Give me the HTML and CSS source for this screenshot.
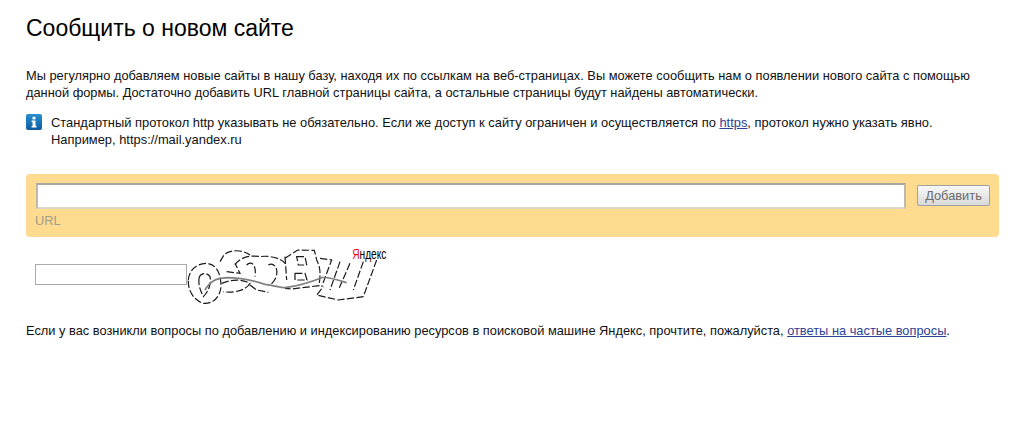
FILE: index.html
```html
<!DOCTYPE html>
<html lang="ru">
<head>
<meta charset="utf-8">
<title>Сообщить о новом сайте</title>
<link rel="stylesheet" href="styles.css">
</head>
<body>
<h1 class="title">Сообщить о новом сайте</h1>
<p class="intro">Мы регулярно добавляем новые сайты в нашу базу, находя их по ссылкам на веб-страницах. Вы можете сообщить нам о появлении нового сайта с помощью данной формы. Достаточно добавить URL главной страницы сайта, а остальные страницы будут найдены автоматически.</p>
<div class="note">
  <svg class="note-icon" width="16" height="16" viewBox="0 0 16 16" aria-hidden="true">
    <defs><linearGradient id="ig" x1="0" y1="0" x2="0" y2="1"><stop offset="0" stop-color="#2a8fd0"/><stop offset="1" stop-color="#0b5a9e"/></linearGradient></defs>
    <rect width="16" height="16" rx="2" fill="url(#ig)"/>
    <rect x="6.5" y="2.8" width="3" height="2.6" fill="#fff"/>
    <path d="M5.6 6.6h3.9v5.2h1v1.6H5.6v-1.6h1v-3.6h-1z" fill="#fff"/>
  </svg>
  <p class="note-text">Стандартный протокол http указывать не обязательно. Если же доступ к сайту ограничен и осуществляется по <a href="#">https</a>, протокол нужно указать явно.<br>Например, https://mail.yandex.ru</p>
</div>
<form class="panel">
  <div class="panel-main">
    <input class="url-input" type="text" aria-label="URL">
    <div class="url-label">URL</div>
  </div>
  <button class="add-btn" type="button">Добавить</button>
</form>
<div class="captcha">
  <input class="captcha-input" type="text" aria-label="captcha">
  <div class="captcha-pic">
    <svg width="200" height="60" viewBox="6 0 600 180" aria-hidden="true">
      <g fill="none" stroke="#1a1a1a" stroke-width="3.6" stroke-dasharray="22 7">
        <path d="M10 105C12 75 35 55 65 55C95 58 108 85 108 125C105 160 80 178 55 175C25 165 8 135 10 105Z"/>
        <path d="M42 100C45 85 65 80 75 95C80 115 70 140 55 155C45 135 40 120 42 100Z"/>
        <path d="M105 50L118 28C140 12 175 15 195 30"/>
        <path d="M110 115C135 105 165 100 195 115C185 135 150 145 115 140"/>
        <path d="M150 60C165 35 200 30 225 35C250 30 290 40 300 55"/>
        <path d="M125 80L165 85L150 55M185 60C200 45 215 60 210 95M195 120L215 135L250 142"/>
        <path d="M250 60C265 50 280 70 275 90C272 105 262 115 255 120"/>
        <path d="M300 35L305 105"/>
      </g>
      <g transform="translate(300 0)" fill="none" stroke="#1a1a1a" stroke-width="3.6" stroke-dasharray="22 7">
        <path d="M0 40L38 15L88 16L95 45C105 65 108 80 102 122L20 132L0 130"/>
        <path d="M35 35L60 35L65 60L40 60Z"/>
        <path d="M30 85L60 85L66 105L30 105Z"/>
        <path d="M105 40L140 45L110 125M165 50L135 135M195 55L160 135M235 50L205 135"/>
        <path d="M275 45L235 155L160 165L95 150L115 125"/>
      </g>
      <path d="M60 135C75 110 90 100 125 98C170 98 200 105 240 118C270 122 285 128 300 128C330 124 375 112 410 98C430 95 460 105 485 113" fill="none" stroke="#808080" stroke-width="5"/>
    </svg>
    <span class="captcha-logo"><span class="logo-ya">Я</span>ндекс</span>
  </div>
</div>
<p class="footer-text">Если у вас возникли вопросы по добавлению и индексированию ресурсов в поисковой машине Яндекс, прочтите, пожалуйста, <a href="#">ответы на частые вопросы</a>.</p>
</body>
</html>
```
FILE: styles.css
```css
html, body { margin: 0; padding: 0; background: #fff; }
body {
  width: 1018px;
  height: 425px;
  overflow: hidden;
  font-family: "Liberation Sans", Arial, sans-serif;
  font-size: 12.83px;
  line-height: 17px;
  color: #111;
  box-sizing: border-box;
  padding: 15px 19px 0 26px;
}
a { color: #2c3f97; }
.title {
  margin: 0 0 25px;
  font-size: 23px;
  line-height: 27px;
  font-weight: 400;
  color: #000;
}
.intro { margin: 0 0 13px; }
.note { display: flex; gap: 9px; align-items: flex-start; }
.note-icon { flex: none; }
.note-text { margin: 0; font-size: 12.9px; }
.panel {
  display: flex;
  align-items: flex-start;
  gap: 11px;
  margin-top: 26px;
  height: 63px;
  box-sizing: border-box;
  padding: 9px 9px 0 10px;
  background: #fedb8f;
  border-radius: 4px;
}
.panel-main { flex: 1; }
.url-input {
  display: block;
  width: 100%;
  height: 26px;
  box-sizing: border-box;
  margin: 0;
  padding: 0 4px;
  background: #fff;
  border: 2px solid #dcd6c4;
  border-top-color: #aaa79c;
  border-left-color: #bdb9ab;
  border-right-color: #bdb9ab;
}
.url-label { margin: 4px 0 0 -1px; color: #a39c8c; line-height: 16px; }
.add-btn {
  width: 73px;
  height: 21px;
  margin: 2px 0 0;
  padding: 0;
  border: 1px solid #a0a0a0;
  border-radius: 2px;
  background: linear-gradient(#f8f8f8, #d9d9d9);
  color: #6d6d6d;
  font: 12.83px/19px "Liberation Sans", Arial, sans-serif;
}
.captcha { display: flex; align-items: flex-start; margin: 8px 0 0 9px; height: 60px; }
.captcha-input {
  width: 152px;
  height: 21px;
  box-sizing: border-box;
  margin: 19px 0 0;
  border: 1px solid #aaa;
  background: #fff;
}
.captcha-pic { position: relative; width: 200px; height: 60px; }
.captcha-pic svg { display: block; }
.captcha-logo {
  position: absolute;
  top: 1px;
  right: 1px;
  font: 400 15px/16px "Liberation Sans", sans-serif;
  transform: scaleX(0.68);
  transform-origin: right top;
  color: #000;
  white-space: nowrap;
}
.logo-ya { color: #e01010; }
.footer-text { margin: 17px 0 0; }
```
